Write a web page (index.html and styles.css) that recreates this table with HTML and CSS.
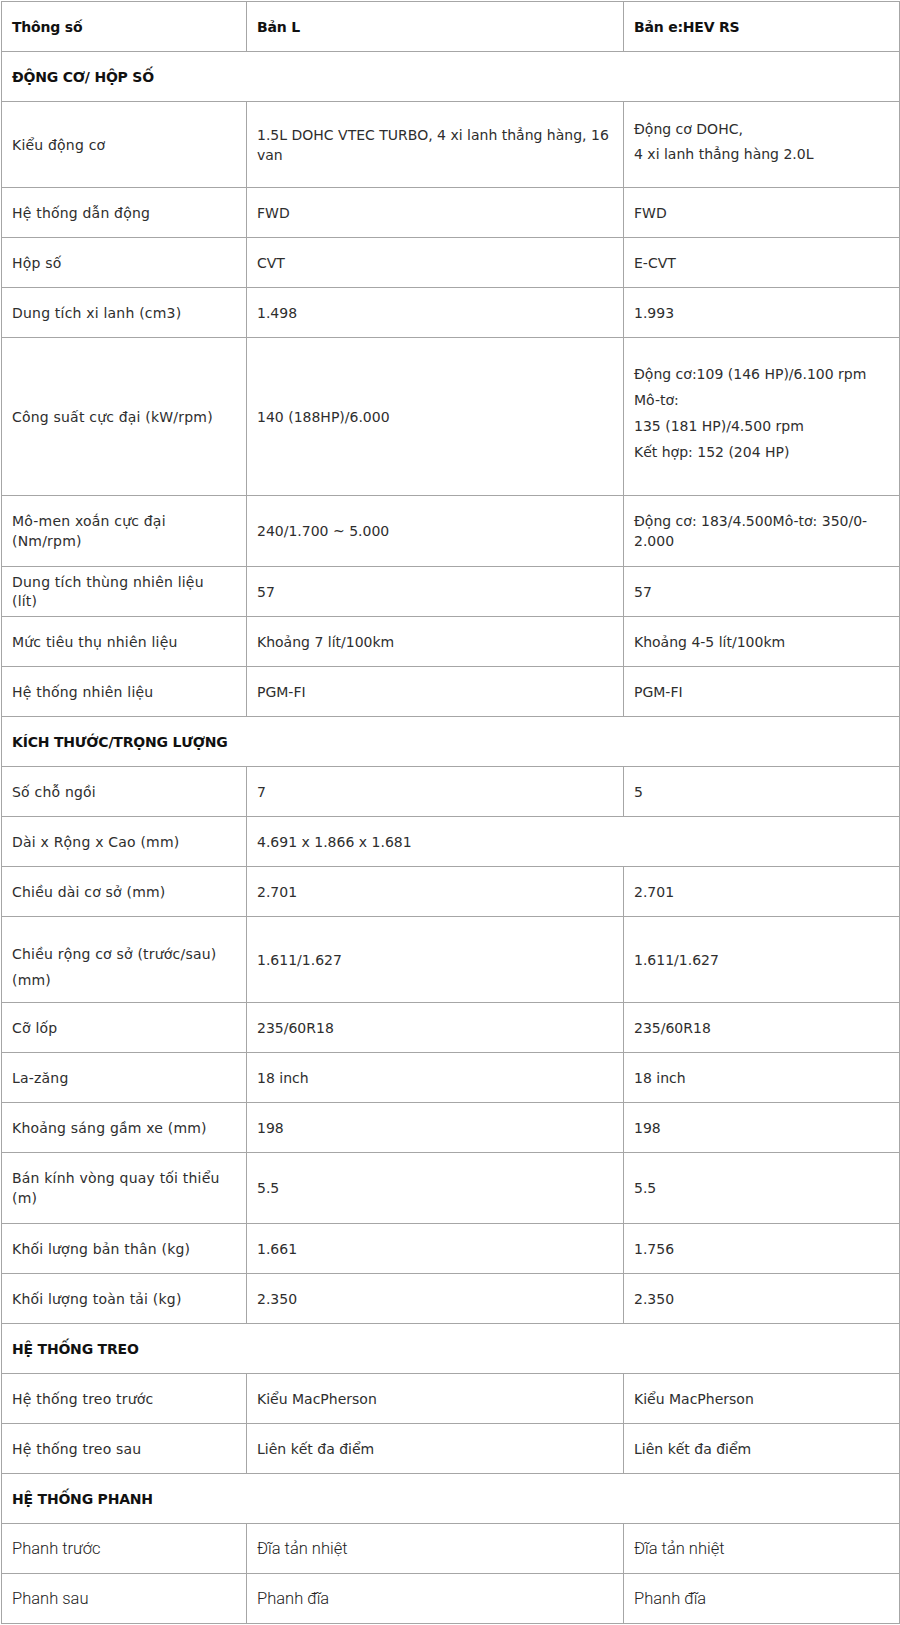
FILE: index.html
```html
<!DOCTYPE html>
<html lang="vi">
<head>
<meta charset="utf-8">
<title>Thông số kỹ thuật</title>
<link rel="stylesheet" href="styles.css">
</head>
<body>
<table class="spec">
  <colgroup><col class="c1"><col class="c2"><col class="c3"></colgroup>
  <thead>
    <tr><th>Thông số</th><th>Bản L</th><th>Bản e:HEV RS</th></tr>
  </thead>
  <tbody>
    <tr class="sec"><td colspan="3">ĐỘNG CƠ/ HỘP SỐ</td></tr>
    <tr><td>Kiểu động cơ</td><td>1.5L DOHC VTEC TURBO, 4 xi lanh thẳng hàng, 16 van</td><td><div class="lines kieu"><p>Động cơ DOHC,</p><p>4 xi lanh thẳng hàng 2.0L</p></div></td></tr>
    <tr><td>Hệ thống dẫn động</td><td>FWD</td><td>FWD</td></tr>
    <tr><td>Hộp số</td><td>CVT</td><td>E-CVT</td></tr>
    <tr><td>Dung tích xi lanh (cm3)</td><td>1.498</td><td>1.993</td></tr>
    <tr><td>Công suất cực đại (kW/rpm)</td><td>140 (188HP)/6.000</td><td><div class="lines power"><p>Động cơ:109 (146 HP)/6.100 rpm</p><p>Mô-tơ:</p><p>135 (181 HP)/4.500 rpm</p><p>Kết hợp: 152 (204 HP)</p></div></td></tr>
    <tr class="two"><td>Mô-men xoắn cực đại<br>(Nm/rpm)</td><td>240/1.700 ~ 5.000</td><td>Động cơ: 183/4.500Mô-tơ: 350/0-2.000</td></tr>
    <tr><td class="tight">Dung tích thùng nhiên liệu<br>(lít)</td><td>57</td><td>57</td></tr>
    <tr><td>Mức tiêu thụ nhiên liệu</td><td>Khoảng 7 lít/100km</td><td>Khoảng 4-5 lít/100km</td></tr>
    <tr><td>Hệ thống nhiên liệu</td><td>PGM-FI</td><td>PGM-FI</td></tr>
    <tr class="sec"><td colspan="3">KÍCH THƯỚC/TRỌNG LƯỢNG</td></tr>
    <tr><td>Số chỗ ngồi</td><td>7</td><td>5</td></tr>
    <tr><td>Dài x Rộng x Cao (mm)</td><td colspan="2">4.691 x 1.866 x 1.681</td></tr>
    <tr><td>Chiều dài cơ sở (mm)</td><td>2.701</td><td>2.701</td></tr>
    <tr><td class="wide-label"><div class="lines track"><p>Chiều rộng cơ sở (trước/sau)<br>(mm)</p></div></td><td>1.611/1.627</td><td>1.611/1.627</td></tr>
    <tr><td>Cỡ lốp</td><td>235/60R18</td><td>235/60R18</td></tr>
    <tr><td>La-zăng</td><td>18 inch</td><td>18 inch</td></tr>
    <tr><td>Khoảng sáng gầm xe (mm)</td><td>198</td><td>198</td></tr>
    <tr class="two"><td>Bán kính vòng quay tối thiểu<br>(m)</td><td>5.5</td><td>5.5</td></tr>
    <tr><td>Khối lượng bản thân (kg)</td><td>1.661</td><td>1.756</td></tr>
    <tr><td>Khối lượng toàn tải (kg)</td><td>2.350</td><td>2.350</td></tr>
    <tr class="sec"><td colspan="3">HỆ THỐNG TREO</td></tr>
    <tr><td>Hệ thống treo trước</td><td>Kiểu MacPherson</td><td>Kiểu MacPherson</td></tr>
    <tr><td>Hệ thống treo sau</td><td>Liên kết đa điểm</td><td>Liên kết đa điểm</td></tr>
    <tr class="sec"><td colspan="3">HỆ THỐNG PHANH</td></tr>
    <tr class="alt"><td>Phanh trước</td><td>Đĩa tản nhiệt</td><td>Đĩa tản nhiệt</td></tr>
    <tr class="alt"><td>Phanh sau</td><td>Phanh đĩa</td><td>Phanh đĩa</td></tr>
  </tbody>
</table>
</body>
</html>
```
FILE: styles.css
```css
html, body {
  margin: 0;
  padding: 0;
  background: #ffffff;
}

body {
  font-family: "DejaVu Sans", "Liberation Sans", sans-serif;
  font-size: 14px;
  color: #2e2e2e;
}

.spec {
  border-collapse: collapse;
  table-layout: fixed;
  width: 898px;
  margin: 1px 0 0 1px;
}

.c1 { width: 245px; }
.c2 { width: 377px; }
.c3 { width: 276px; }

.spec th,
.spec td {
  border: 1px solid #a6a6a6;
  padding: 14.5px 10px;
  line-height: 20px;
  vertical-align: middle;
  text-align: left;
  font-weight: normal;
}

.spec td:first-child {
  letter-spacing: 0.2px;
}

.spec th,
.spec .sec td {
  font-weight: bold;
  color: #111111;
  letter-spacing: -0.2px;
}

.spec p {
  margin: 0;
}

.lines p {
  line-height: 25px;
}

.kieu {
  padding-bottom: 6px;
}

.power p {
  line-height: 26px;
}

.power {
  padding-top: 8px;
  padding-bottom: 16px;
}

.spec .wide-label {
  padding-top: 25px;
  padding-bottom: 9px;
}

.track p {
  line-height: 25.5px;
}

.spec .two td {
  padding-top: 15px;
  padding-bottom: 15px;
}

.spec td.tight {
  padding-top: 6px;
  padding-bottom: 6px;
  line-height: 18.5px;
}

.spec .alt td {
  font-family: Roboto, "Liberation Sans", sans-serif;
  font-weight: 300;
  font-size: 16.5px;
  color: #222222;
  letter-spacing: 0;
}
```
